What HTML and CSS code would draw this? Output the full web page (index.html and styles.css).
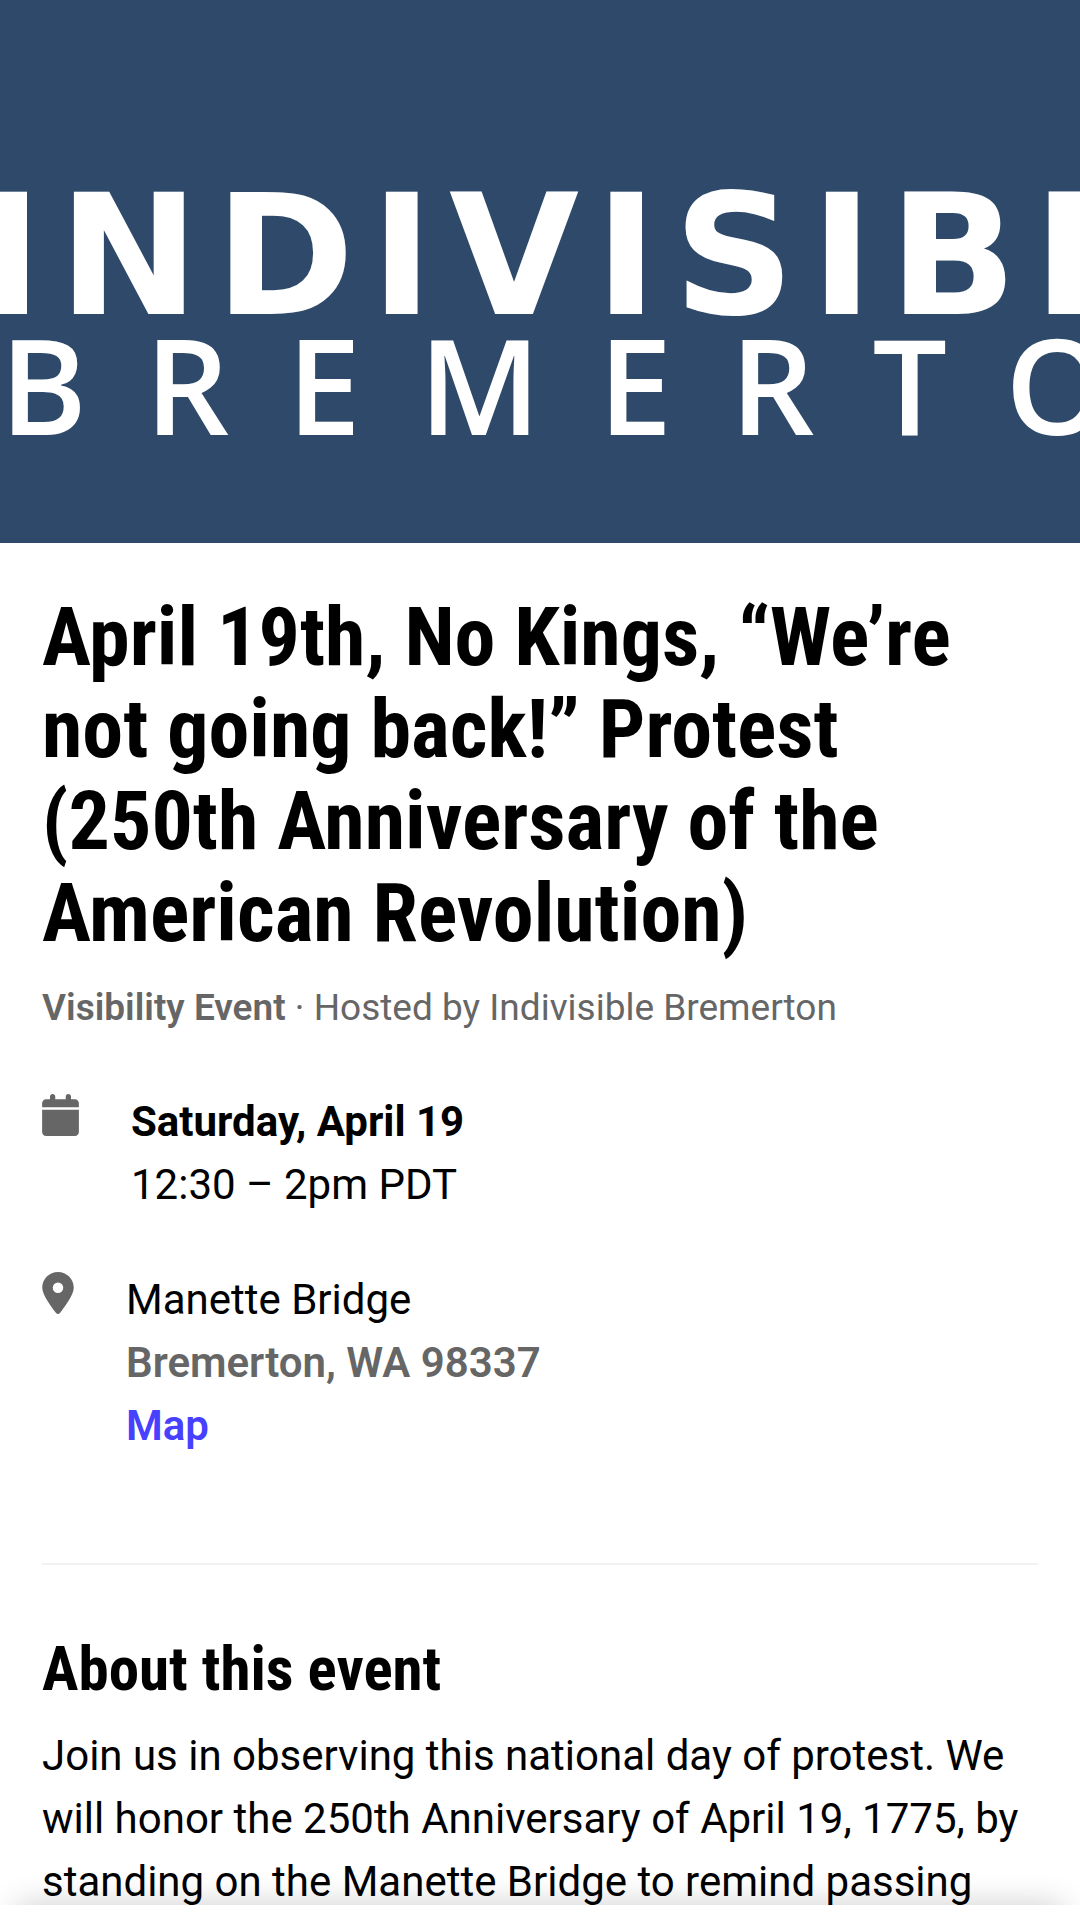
FILE: index.html
```html
<!DOCTYPE html>
<html lang="en">
<head>
<meta charset="utf-8">
<meta name="viewport" content="width=device-width, initial-scale=1">
<title>April 19th, No Kings</title>
<link rel="stylesheet" href="styles.css">
</head>
<body>
<header class="banner">
  <div class="banner-name">INDIVISIBLE</div>
  <div class="banner-place">BREMERTON</div>
</header>
<main class="event">
  <h1 class="title">April 19th, No Kings, “We’re <br>not going back!” Protest <br>(250th Anniversary of the <br>American Revolution)</h1>
  <p class="host"><strong class="strong">Visibility Event</strong> · Hosted by Indivisible Bremerton</p>
  <section class="details">
    <div class="detail">
      <svg class="icon icon-calendar" viewBox="0 0 448 512" aria-hidden="true"><path d="M96 32V64H48C21.500 64 0 85.500 0 112v48H448V112c0-26.500-21.500-48-48-48H352V32c0-17.700-14.300-32-32-32s-32 14.300-32 32V64H160V32c0-17.700-14.300-32-32-32S96 14.300 96 32zM448 192H0V464c0 26.500 21.500 48 48 48H400c26.500 0 48-21.500 48-48V192z"/></svg>
      <div>
        <p class="date">Saturday, April 19</p>
        <p>12:30 – 2pm PDT</p>
      </div>
    </div>
    <div class="detail">
      <svg class="icon icon-pin" viewBox="0 0 384 512" aria-hidden="true"><path d="M215.700 499.200C267 435 384 279.400 384 192C384 86 298 0 192 0S0 86 0 192c0 87.400 117 243 168.300 307.200c12.300 15.300 35.100 15.300 47.400 0zM192 128a64 64 0 1 1 0 128 64 64 0 1 1 0-128z"/></svg>
      <div>
        <p>Manette Bridge</p>
        <p class="strong muted">Bremerton, WA 98337</p>
        <p><a class="strong link" href="#map">Map</a></p>
      </div>
    </div>
  </section>
  <section class="about">
    <h2 class="subtitle">About this event</h2>
    <p>Join us in observing this national day of protest. We will honor the 250th Anniversary of April 19, 1775, by standing on the Manette Bridge to remind passing</p>
  </section>
</main>
<div class="bottom-bar"></div>
</body>
</html>
```
FILE: styles.css
```css
* {
  box-sizing: border-box;
}

body {
  margin: 0;
  background: #fff;
  color: #000;
  font-family: Roboto, "Liberation Sans", sans-serif;
  font-size: 42px;
  line-height: 63px;
}

p, h1, h2 {
  margin: 0;
}

.banner {
  height: 543px;
  padding-top: 172px;
  overflow: hidden;
  background: #2e4969;
  color: #fff;
  white-space: nowrap;
}

.banner-name {
  margin-left: -20px;
  font-family: "DejaVu Sans", sans-serif;
  font-weight: 700;
  font-size: 168px;
  line-height: 168px;
  letter-spacing: 16px;
}

.banner-place {
  font-family: "Open Sans", sans-serif;
  font-weight: 600;
  font-size: 132px;
  line-height: 88px;
  letter-spacing: 58px;
}

.event {
  padding: 48px 42px 0;
}

.title, .subtitle {
  font-family: "Roboto Condensed", "Liberation Sans Narrow", sans-serif;
  font-weight: 700;
}

.title {
  font-size: 82px;
  line-height: 92px;
}

.host {
  margin-top: 21px;
  font-size: 37px;
  line-height: 55px;
  color: #666;
}

.date {
  font-weight: 700;
}

.strong {
  font-weight: 600;
}

.muted {
  color: #666;
}

.link {
  color: #4740ff;
  text-decoration: none;
}

.details {
  display: flex;
  flex-direction: column;
  gap: 52px;
  padding: 55px 0 106px;
  border-bottom: 2px solid #f2f2f2;
}

.detail {
  display: flex;
  align-items: flex-start;
  gap: 52px;
}

.icon {
  flex: none;
  height: 42px;
  margin-top: 4px;
  fill: #666;
}

.icon-calendar {
  width: 37px;
}

.icon-pin {
  width: 32px;
}

.about {
  padding-top: 68px;
}

.subtitle {
  margin-bottom: 19px;
  font-size: 61px;
  line-height: 72px;
}

.bottom-bar {
  position: fixed;
  right: 0;
  bottom: -60px;
  left: 0;
  height: 79px;
  background: #fff;
  box-shadow: 0 -16px 32px -16px rgba(0, 0, 0, 0.2);
}
```
